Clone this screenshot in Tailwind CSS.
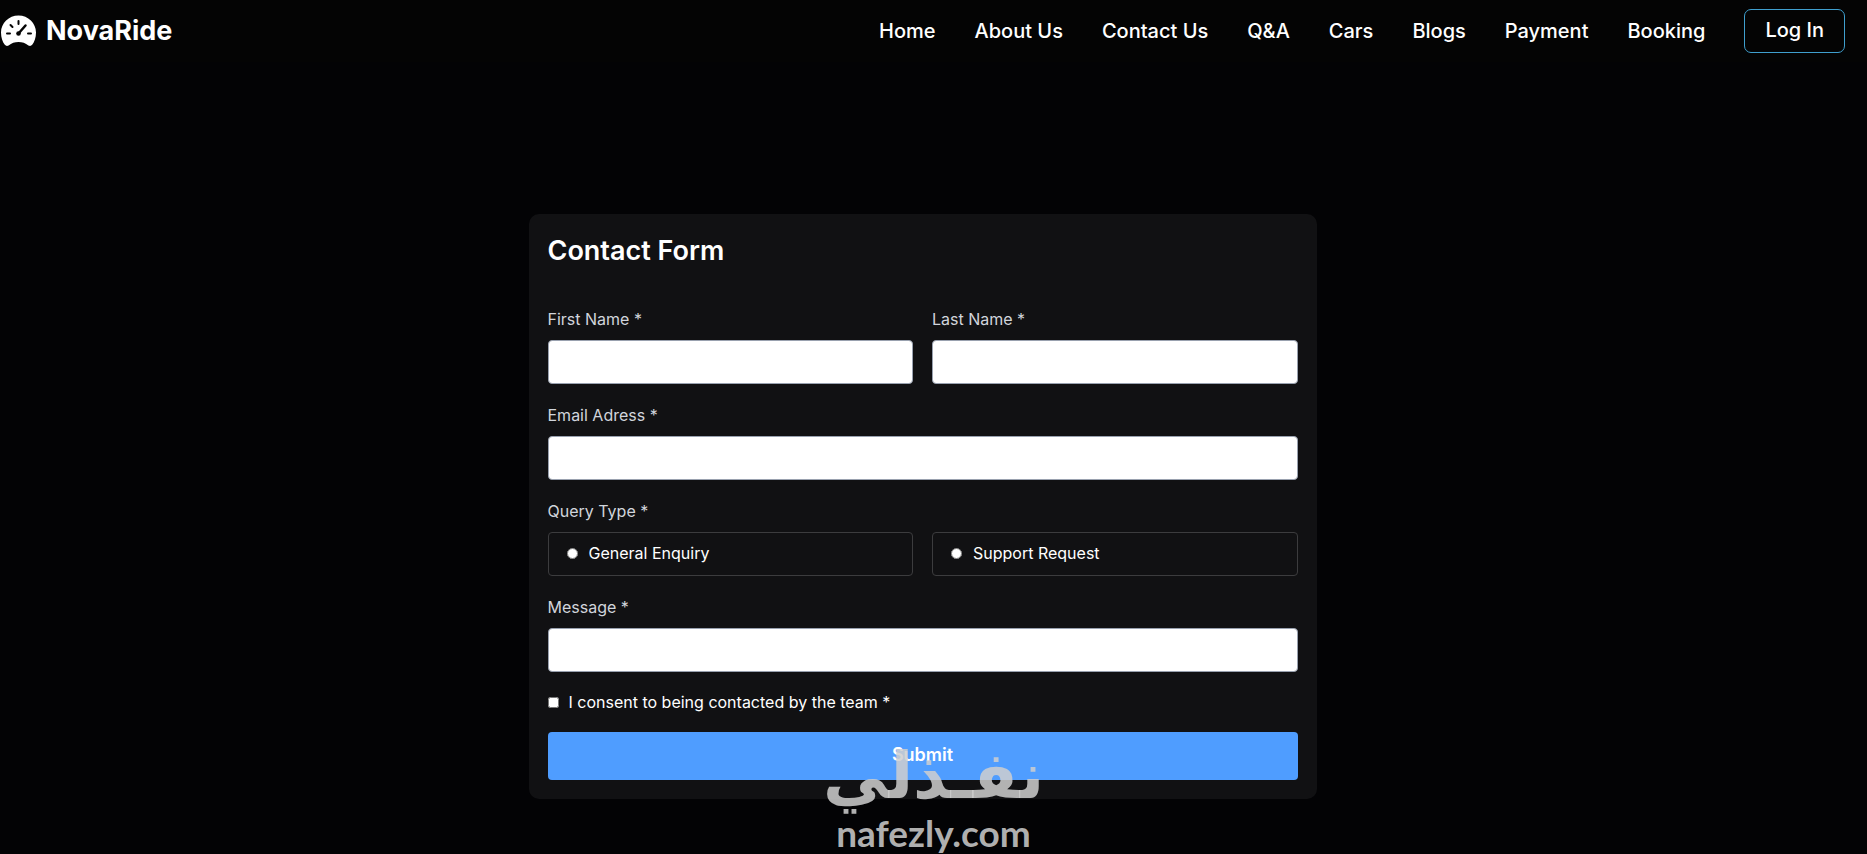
<!DOCTYPE html>
<html lang="en">
<head>
  <meta charset="UTF-8" />
  <meta name="viewport" content="width=device-width, initial-scale=1.0" />
  <title>NovaRide - Contact</title>
  <script src="https://cdn.jsdelivr.net/npm/@tailwindcss/browser@4"></script>
</head>
<body class="relative min-h-screen bg-[#030305] font-['Inter','Liberation_Sans',sans-serif] text-base text-white">
  <!-- Header -->
  <header class="flex items-center justify-between bg-[#040404] py-[9px] pr-[22px]">
    <a href="#" class="flex items-center gap-[10px] text-[27px] leading-9 font-bold">
      <svg class="h-[32px] w-[36px] shrink-0" viewBox="0 0 36 32" aria-hidden="true">
        <path fill="#fff" d="M18.500 0.500C8.800 0.500 1 8.200 1 17.500c0 5.200 1.600 9.500 3.800 12.300 1 1.200 2.500 1.400 3.800.6C11.500 28.200 14.800 27 18.500 27s7 1.200 9.900 3.400c1.300.8 2.800.6 3.800-.6C34.400 27 36 22.700 36 17.500 36 8.200 28.200 .5 18.500 .5z" />
        <g stroke="#050505" stroke-width="2" stroke-linecap="round">
          <path d="M18.500 6v3M10.500 10l2 2M7 18.500h3M28 18.500h3" />
          <path stroke-width="2.500" d="M18.500 18.500l7-8" />
        </g>
        <circle cx="18.500" cy="18.500" r="2.300" fill="#050505" />
      </svg>
      <span>NovaRide</span>
    </a>
    <nav class="flex items-center gap-[39px] text-[20px] leading-7 font-medium">
      <a href="#">Home</a>
      <a href="#">About Us</a>
      <a href="#">Contact Us</a>
      <a href="#">Q&amp;A</a>
      <a href="#">Cars</a>
      <a href="#">Blogs</a>
      <a href="#">Payment</a>
      <a href="#">Booking</a>
      <button type="button" class="h-[44px] rounded-[7px] border border-[#3f9fce] px-5 pb-[2px]">Log In</button>
    </nav>
  </header>

  <!-- Contact form -->
  <main class="pt-[152px] pr-[22px] pb-14">
    <form class="mx-auto w-full max-w-[788px] rounded-[10px] bg-[#111113] p-[19px]">
      <h1 class="text-[27px] leading-9 font-semibold">Contact Form</h1>

      <div class="mt-[38px] grid grid-cols-2 gap-[19px]">
        <div class="flex flex-col gap-[9px]">
          <label for="first-name" class="text-gray-300">First Name *</label>
          <input id="first-name" type="text" class="h-[44px] rounded-[4px] border border-gray-400 bg-white px-3 text-gray-900" />
        </div>
        <div class="flex flex-col gap-[9px]">
          <label for="last-name" class="text-gray-300">Last Name *</label>
          <input id="last-name" type="text" class="h-[44px] rounded-[4px] border border-gray-400 bg-white px-3 text-gray-900" />
        </div>
        <div class="col-span-2 flex flex-col gap-[9px]">
          <label for="email" class="text-gray-300">Email Adress *</label>
          <input id="email" type="email" class="h-[44px] rounded-[4px] border border-gray-400 bg-white px-3 text-gray-900" />
        </div>
        <fieldset class="col-span-2">
          <legend class="mb-[9px] text-gray-300">Query Type *</legend>
          <div class="grid grid-cols-2 gap-[19px]">
            <label class="flex h-[44px] items-center gap-[11px] rounded-[4px] border border-[#3c3c3e] px-[18px] pb-[2px]">
              <input type="radio" name="query" class="size-[11px]" />
              General Enquiry
            </label>
            <label class="flex h-[44px] items-center gap-[11px] rounded-[4px] border border-[#3c3c3e] px-[18px] pb-[2px]">
              <input type="radio" name="query" class="size-[11px]" />
              Support Request
            </label>
          </div>
        </fieldset>
        <div class="col-span-2 flex flex-col gap-[9px]">
          <label for="message" class="text-gray-300">Message *</label>
          <textarea id="message" rows="1" class="h-[44px] resize-none rounded-[4px] border border-gray-400 bg-white px-3 py-2 text-gray-900"></textarea>
        </div>
        <label class="col-span-2 flex items-center gap-[10px] leading-[22px]">
          <input type="checkbox" class="size-[11px]" />
          I consent to being contacted by the team *
        </label>
        <button type="submit" class="col-span-2 h-[48px] rounded-[4px] bg-[#4f9dff] pb-[2px] text-lg font-semibold">Submit</button>
      </div>
    </form>
  </main>

  <!-- Watermark -->
  <div class="pointer-events-none absolute inset-x-0 top-[738px] flex flex-col items-center text-[#cfcfcf]/85">
    <span lang="ar" dir="rtl" class="font-['DejaVu_Sans',sans-serif] text-[65px] leading-[76px] font-bold">نفـذلي</span>
    <span class="font-['Lato',sans-serif] text-[37px] leading-[38px] font-bold">nafezly.com</span>
  </div>
</body>
</html>
